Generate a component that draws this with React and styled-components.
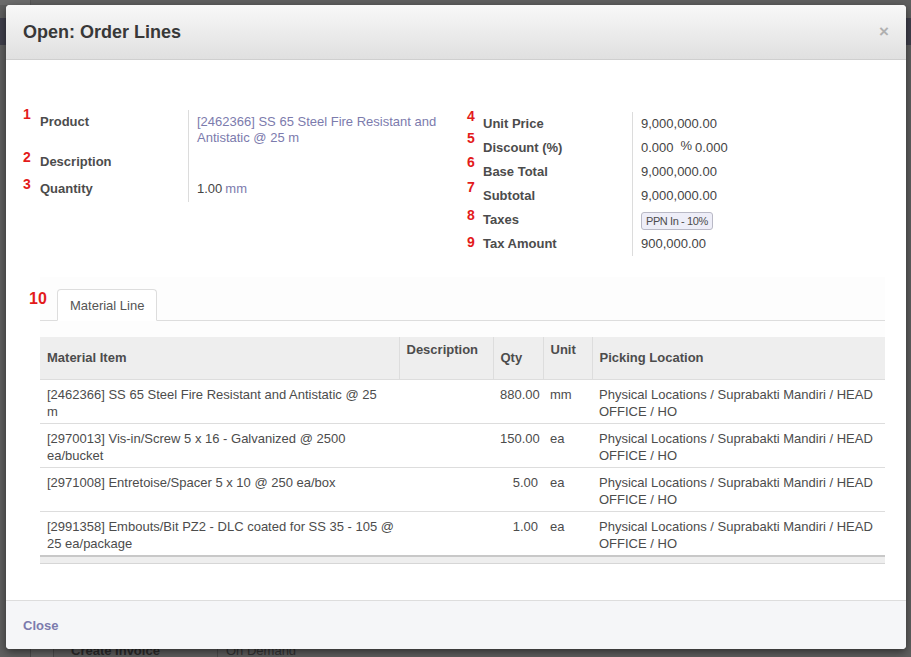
import styled, { createGlobalStyle } from "styled-components";

const GlobalStyle = createGlobalStyle`
    html, body {
        margin: 0;
        padding: 0;
        overflow: hidden;
    }
    body {
        font-family: "Liberation Sans", Arial, Helvetica, sans-serif;
        font-size: 13px;
        color: #4c4c4c;
    }
`

const leftFields = [
    { n: 1, dy: -8, h: 40, label: "Product", value: "[2462366] SS 65 Steel Fire Resistant and Antistatic @ 25 m", link: true, tall: true },
    { n: 2, dy: -5, h: 27, label: "Description", value: "" },
    { n: 3, dy: -5, h: 25, label: "Quantity", qty: true },
]

const rightFields = [
    { n: 4, dy: -7, h: 24, label: "Unit Price", value: "9,000,000.00" },
    { n: 5, dy: -9, h: 24, label: "Discount (%)", discount: true },
    { n: 6, dy: -9, h: 24, label: "Base Total", value: "9,000,000.00" },
    { n: 7, dy: -8, h: 24, label: "Subtotal", value: "9,000,000.00" },
    { n: 8, dy: -4, h: 24, label: "Taxes", tag: "PPN In - 10%" },
    { n: 9, dy: -1.5, h: 24, label: "Tax Amount", value: "900,000.00" },
]

// item names keep the line breaks the list shows
const lines = [
    { item: ["[2462366] SS 65 Steel Fire Resistant and Antistatic @ 25", "m"], qty: "880.00", unit: "mm" },
    { item: ["[2970013] Vis-in/Screw 5 x 16 - Galvanized @ 2500", "ea/bucket"], qty: "150.00", unit: "ea" },
    { item: ["[2971008] Entretoise/Spacer 5 x 10 @ 250 ea/box"], qty: "5.00", unit: "ea" },
    { item: ["[2991358] Embouts/Bit PZ2 - DLC coated for SS 35 - 105 @", "25 ea/package"], qty: "1.00", unit: "ea" },
]

function renderValue(f){
    if (f.link) return <LinkText>{f.value}</LinkText>
    if (f.qty) return <>1.00<UomText>mm</UomText></>
    if (f.discount) return <>0.000<Percent>%</Percent>0.000</>
    if (f.tag) return <Tag>{f.tag}</Tag>
    return f.value
}

function FieldList({ fields, indent, top }){
    return(
        <Group $top={top}>
            {fields.map(f => (
                <FieldRow key={f.n}>
                    <Label $indent={indent} $h={f.h}>
                        <Num $dy={f.dy}>{f.n}</Num>
                        {f.label}
                    </Label>
                    <Value $tall={f.tall} $h={f.h}>{renderValue(f)}</Value>
                </FieldRow>
            ))}
        </Group>
    )
}

function App(){
    return(
        <Page>
            <GlobalStyle />
            <TopStrip><TopBlock /></TopStrip>
            <NavStrip />
            <BgRow>
                <BgCell $w={30} />
                <BgCheck />
                <BgLabel>Create Invoice</BgLabel>
                <BgValue>On Demand</BgValue>
            </BgRow>

            <Modal>
                <Header>
                    <Title>Open: Order Lines</Title>
                    <CloseX>×</CloseX>
                </Header>
                <Body>
                    <FormGrid>
                        <FieldList fields={leftFields} indent={17} top={0} />
                        <FieldList fields={rightFields} indent={16} top={1.5} />
                    </FormGrid>
                    <Notebook>
                        <BigNum>10</BigNum>
                        <TabBar>
                            <Tab>Material Line</Tab>
                        </TabBar>
                        <Table>
                            <colgroup>
                                <col style={{ width: 359 }} />
                                <col style={{ width: 94 }} />
                                <col style={{ width: 50 }} />
                                <col style={{ width: 49 }} />
                                <col />
                            </colgroup>
                            <thead>
                                <tr>
                                    <Th>Material Item</Th>
                                    <Th $top>Description</Th>
                                    <Th>Qty</Th>
                                    <Th $top>Unit</Th>
                                    <Th>Picking Location</Th>
                                </tr>
                            </thead>
                            <tbody>
                                {lines.map(l => (
                                    <tr key={l.item[0]}>
                                        <Td>{l.item.map((t, i) => <ItemLine key={i}>{t}</ItemLine>)}</Td>
                                        <Td></Td>
                                        <Td $right>{l.qty}</Td>
                                        <Td>{l.unit}</Td>
                                        <Td>Physical Locations / Suprabakti Mandiri / HEAD OFFICE / HO</Td>
                                    </tr>
                                ))}
                            </tbody>
                            <tfoot>
                                <tr><FootCell colSpan={5} /></tr>
                            </tfoot>
                        </Table>
                    </Notebook>
                </Body>
                <Footer>
                    <CloseLink>Close</CloseLink>
                </Footer>
            </Modal>
        </Page>
    )
}

const Page = styled.div`
    position: relative;
    width: 911px;
    height: 657px;
    overflow: hidden;
    background-color: #5f5f5f;
    display: flex;
    flex-direction: column;
`

const TopStrip = styled.div`
    height: 18px;
    display: flex;
`

const TopBlock = styled.div`
    width: 30px;
    height: 5px;
    background-color: #6c6c6c;
    border-right: 1px solid #555;
`

const NavStrip = styled.div`
    height: 27px;
    background-color: #3f3f4b;
`

const BgRow = styled.div`
    margin-top: auto;
    height: 18px;
    display: flex;
    align-items: stretch;
`

const BgCell = styled.div`
    width: ${p => p.$w}px;
`

const BgCheck = styled.div`
    width: 22px;
    border-left: 1px solid #4c4c4c;
    border-right: 1px solid #4c4c4c;
    background-color: #646464;
`

const BgLabel = styled.div`
    width: 146px;
    padding: 3px 0 0 17px;
    border-right: 1px solid #4c4c4c;
    font-weight: bold;
    line-height: 17px;
    color: #2b2b2b;
`

const BgValue = styled.div`
    padding: 3px 0 0 8px;
    line-height: 17px;
    color: #333;
`

const Modal = styled.div`
    position: absolute;
    top: 5px;
    left: 6px;
    width: 900px;
    height: 644px;
    display: flex;
    flex-direction: column;
    background-color: #fff;
    border-radius: 4px;
    box-shadow: 0 3px 9px rgba(0, 0, 0, 0.5);
    overflow: hidden;
`

const Header = styled.div`
    height: 54px;
    flex-shrink: 0;
    padding: 0 17px;
    display: flex;
    align-items: center;
    justify-content: space-between;
    background: linear-gradient(to bottom, #f8f8f8, #e0e0e0);
    border-bottom: 1px solid #cfcfcf;
`

const Title = styled.h4`
    margin: 0;
    font-size: 18px;
    font-weight: bold;
    color: #383838;
`

const CloseX = styled.span`
    font-size: 17px;
    font-weight: bold;
    color: #b0b0b0;
    line-height: 1;
    margin-top: -2px;
`

const Body = styled.div`
    flex: 1;
    padding: 50px 21px 0 17px;
    overflow: hidden;
`

const FormGrid = styled.div`
    display: grid;
    grid-template-columns: 444px 1fr;
    align-items: start;
`

const Group = styled.div`
    display: grid;
    grid-template-columns: 165px 1fr;
    margin-top: ${p => p.$top}px;
`

const FieldRow = styled.div`
    display: contents;
`

const Label = styled.div`
    position: relative;
    box-sizing: border-box;
    height: ${p => p.$h}px;
    padding: 3px 0 0 ${p => p.$indent}px;
    font-weight: bold;
    line-height: 17px;
    color: #4c4c4c;
`

const Num = styled.span`
    position: absolute;
    left: 0;
    top: ${p => 4.5 + p.$dy}px;
    font-size: 14px;
    font-weight: bold;
    line-height: 14px;
    color: #e31b1b;
`

const BigNum = styled.span`
    position: absolute;
    left: -11px;
    top: 14px;
    font-size: 16px;
    font-weight: bold;
    line-height: 16px;
    color: #e31b1b;
`

const Value = styled.div`
    box-sizing: border-box;
    height: ${p => p.$h}px;
    border-left: 1px solid #dcdcdc;
    padding: ${p => p.$tall ? 4 : 3}px 0 0 8px;
    line-height: ${p => p.$tall ? 16 : 17}px;
    color: #444;
    white-space: nowrap;
    ${p => p.$tall && "white-space: normal; padding-right: 8px;"}
`

const LinkText = styled.span`
    color: #7c7bad;
`

const UomText = styled.span`
    color: #7c7bad;
    margin-left: 3px;
`

const Percent = styled.span`
    display: inline-block;
    margin: 0 3px 0 7px;
    line-height: 13px;
    vertical-align: 2px;
`

const Tag = styled.span`
    display: inline-block;
    box-sizing: border-box;
    margin-top: 1px;
    padding: 0 4px;
    height: 18px;
    line-height: 16px;
    font-size: 11px;
    letter-spacing: -0.4px;
    color: #4c4c4c;
    background-color: #eeeef8;
    border: 1px solid #b9b9c6;
    border-radius: 3px;
    vertical-align: top;
`

const Notebook = styled.div`
    position: relative;
    margin: 21px 0 0 17px;
    padding-top: 12px;
    background-color: #fdfdfd;
`

const TabBar = styled.div`
    display: flex;
    padding-left: 17px;
    border-bottom: 1px solid #dddddd;
`

const Tab = styled.div`
    height: 29px;
    line-height: 29px;
    padding: 1px 12px 0;
    box-sizing: content-box;
    margin-bottom: -1px;
    border: 1px solid #dddddd;
    border-bottom: 1px solid #fff;
    border-radius: 4px 4px 0 0;
    background-color: #fff;
    color: #555;
`

const Table = styled.table`
    width: 845px;
    margin-top: 16px;
    border-collapse: collapse;
    table-layout: fixed;
    background-color: #fff;
`

const Th = styled.th`
    height: 43px;
    box-sizing: border-box;
    padding: ${p => p.$top ? "4px" : "0"} 5px 0 7px;
    vertical-align: ${p => p.$top ? "top" : "middle"};
    text-align: left;
    font-weight: bold;
    line-height: 17px;
    color: #4c4c4c;
    background-color: #eeeeee;
    border-left: 1px solid #dddddd;
    border-bottom: 1px solid #dddddd;
    &:first-child {
        border-left: none;
    }
`

const Td = styled.td`
    padding: 6px 5px 3px 7px;
    vertical-align: top;
    text-align: ${p => p.$right ? "right" : "left"};
    line-height: 17px;
    color: #4c4c4c;
    border-bottom: 1px solid #dddddd;
`

const ItemLine = styled.div`
    white-space: nowrap;
`

const FootCell = styled.td`
    height: 6px;
    padding: 0;
    background-color: #eeeeee;
    border-top: 2px solid #c8c8c8;
    border-bottom: 1px solid #d6d6d6;
`

const Footer = styled.div`
    height: 48px;
    flex-shrink: 0;
    padding: 0 17px;
    display: flex;
    align-items: center;
    background-color: #f5f6f8;
    border-top: 1px solid #dddddd;
`

const CloseLink = styled.a`
    font-weight: bold;
    color: #7c7bad;
    cursor: pointer;
`

export default App
